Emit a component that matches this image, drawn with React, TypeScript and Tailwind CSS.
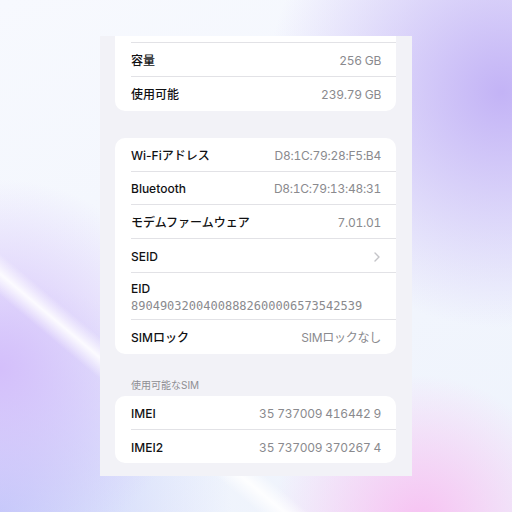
import { FC, ReactNode } from "react";

type RowProps = {
  label: string;
  value?: ReactNode;
  last?: boolean;
  h?: string;
};

const Row: FC<RowProps> = ({ label, value, last, h = "h-[34px]" }) => {
  return (
    <div className="pl-4">
      <div
        className={`flex ${h} items-center justify-between pt-[2px] pr-[15px] ${
          last ? "" : "border-b border-[#e2e2e6]"
        }`}
      >
        <span className="font-medium text-[#111113]">{label}</span>
        <span className="tracking-[-0.25px] text-[#8a8a8e] tabular-nums">{value}</span>
      </div>
    </div>
  );
};

const Chevron = () => (
  <svg width="6" height="10" viewBox="0 0 6 10" className="mr-[1px]">
    <path
      d="M1 1l4 4-4 4"
      fill="none"
      stroke="#c4c4c8"
      strokeWidth="1.4"
      strokeLinecap="round"
      strokeLinejoin="round"
    />
  </svg>
);

export default function App() {
  return (
    <div className="flex h-screen w-full items-center justify-center bg-[linear-gradient(40deg,transparent_23%,rgba(255,255,255,0.9)_25.3%,transparent_27.5%),radial-gradient(circle_at_98%_18%,#c3b3f6_0%,transparent_36%),radial-gradient(circle_at_0%_72%,#d4bffb_0%,transparent_30%),radial-gradient(circle_at_0%_100%,#c3ccfa_0%,transparent_32%),radial-gradient(circle_at_82%_102%,#f7c2f2_0%,transparent_22%),linear-gradient(160deg,#f7f9fe,#eef3fc)]">
      {/* Settings panel */}
      <div className="flex h-[440px] w-[312px] flex-col overflow-hidden bg-[#f2f2f7] pl-[15px] pr-[16px] font-['Inter','Noto_Sans_CJK_JP',sans-serif] text-[12px] leading-none">
        {/* Storage card (cut off at top) */}
        <div className="rounded-b-[10px] bg-white">
          <div className="pl-4">
            <div className="h-[7px] border-b border-[#e2e2e6]" />
          </div>
          <Row label="容量" value="256 GB" />
          <Row label="使用可能" value="239.79 GB" last />
        </div>

        {/* Network card */}
        <div className="mt-[27px] rounded-[10px] bg-white">
          <Row label="Wi-Fiアドレス" value="D8:1C:79:28:F5:B4" />
          <Row label="Bluetooth" value="D8:1C:79:13:48:31" h="h-[33px]" />
          <Row label="モデムファームウェア" value="7.01.01" />
          <Row label="SEID" value={<Chevron />} />
          <div className="pl-4">
            <div className="flex h-[47px] flex-col justify-center gap-[5px] border-b border-[#e2e2e6] pt-[2px] pr-[15px]">
              <span className="font-medium text-[#111113]">EID</span>
              <span className="font-['DejaVu_Sans_Mono',monospace] text-[12px] text-[#8a8a8e]">
                89049032004008882600006573542539
              </span>
            </div>
          </div>
          <Row label="SIMロック" value="SIMロックなし" last />
        </div>

        {/* Section header */}
        <div className="mt-[25px] mb-[5px] pl-4 text-[10px] leading-[12px] text-[#8e8e93]">
          使用可能なSIM
        </div>

        {/* IMEI card */}
        <div className="rounded-[10px] bg-white">
          <Row label="IMEI" value="35 737009 416442 9" />
          <Row label="IMEI2" value="35 737009 370267 4" h="h-[33px]" last />
        </div>
      </div>
    </div>
  );
}
